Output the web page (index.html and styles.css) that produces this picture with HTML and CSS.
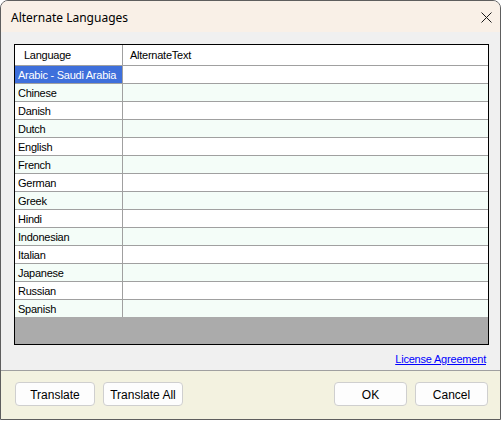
FILE: index.html
```html
<!doctype html>
<html>
<head>
<title>Alternate Languages</title>
<link rel="stylesheet" href="styles.css">
</head>
<body>
<div class="window">
  <div class="titlebar">
    <span class="title">Alternate Languages</span>
    <svg class="close" width="11" height="11" viewBox="0 0 11 11"><path d="M0.5 0.5L10.5 10.5M10.5 0.5L0.5 10.5" stroke="#1a1a1a" stroke-width="1" fill="none"/></svg>
  </div>
  <div class="content">
    <div class="grid">
      <div class="row head">
        <div class="cell lang">Language</div>
        <div class="cell alt">AlternateText</div>
      </div>
      <div class="row"><div class="cell lang selected">Arabic - Saudi Arabia</div><div class="cell alt"></div></div>
      <div class="row odd"><div class="cell lang">Chinese</div><div class="cell alt"></div></div>
      <div class="row"><div class="cell lang">Danish</div><div class="cell alt"></div></div>
      <div class="row odd"><div class="cell lang">Dutch</div><div class="cell alt"></div></div>
      <div class="row"><div class="cell lang">English</div><div class="cell alt"></div></div>
      <div class="row odd"><div class="cell lang">French</div><div class="cell alt"></div></div>
      <div class="row"><div class="cell lang">German</div><div class="cell alt"></div></div>
      <div class="row odd"><div class="cell lang">Greek</div><div class="cell alt"></div></div>
      <div class="row"><div class="cell lang">Hindi</div><div class="cell alt"></div></div>
      <div class="row odd"><div class="cell lang">Indonesian</div><div class="cell alt"></div></div>
      <div class="row"><div class="cell lang">Italian</div><div class="cell alt"></div></div>
      <div class="row odd"><div class="cell lang">Japanese</div><div class="cell alt"></div></div>
      <div class="row"><div class="cell lang">Russian</div><div class="cell alt"></div></div>
      <div class="row odd last"><div class="cell lang">Spanish</div><div class="cell alt"></div></div>
      <div class="empty"></div>
    </div>
    <div class="linkrow"><a href="#">License Agreement</a></div>
  </div>
  <div class="footer">
    <button class="btn">Translate</button>
    <button class="btn">Translate All</button>
    <span class="spacer"></span>
    <button class="btn small">OK</button>
    <button class="btn small">Cancel</button>
  </div>
</div>
</body>
</html>
```

FILE: styles.css
```css
html, body {
  margin: 0;
  padding: 0;
  background: #ffffff;
}
body {
  font-family: "Liberation Sans", Arial, sans-serif;
  font-size: 11px;
  color: #000;
}
.window {
  box-sizing: border-box;
  width: 501px;
  height: 420px;
  border: 1px solid #5e5e5e;
  border-radius: 8px 8px 0 0;
  overflow: hidden;
  display: flex;
  flex-direction: column;
  background: #f0f0f0;
}
.titlebar {
  height: 31px;
  flex: none;
  background: #f9f0e7;
  display: flex;
  align-items: center;
  padding: 0 8px 0 10px;
}
.title {
  font-family: "Noto Sans", "Open Sans", sans-serif;
  font-size: 12px;
  flex: 1;
  margin-top: 1px;
}
.close {
  margin-top: 1px;
}
.content {
  height: 338px;
  flex: none;
  padding: 12px 11px 0 13px;
  box-sizing: border-box;
  display: flex;
  flex-direction: column;
}
.grid {
  height: 301px;
  box-sizing: border-box;
  border: 1px solid #000;
  display: flex;
  flex-direction: column;
  background: #ababab;
}
.row {
  display: flex;
  height: 18px;
  box-sizing: border-box;
  border-bottom: 1px solid #a0a0a0;
  background: #fff;
}
.row.odd { background: #f4fdf8; }
.row.last { border-bottom: none; height: 17px; }
.row.head {
  height: 21px;
  background: #fff;
}
.cell {
  box-sizing: border-box;
  line-height: 17px;
  padding-top: 1px;
  white-space: nowrap;
  overflow: hidden;
  letter-spacing: -0.25px;
}
.lang {
  width: 108px;
  border-right: 1px solid #a0a0a0;
  padding-left: 3px;
}
.alt {
  flex: 1;
  padding-left: 7px;
}
.head .cell { line-height: 20px; padding-top: 0; }
.head .lang { padding-left: 9px; }
.selected {
  background: #3e6fdb;
  color: #fff;
}
.empty { flex: 1; }
.linkrow {
  flex: 1;
  display: flex;
  justify-content: flex-end;
  align-items: center;
  padding-right: 3px;
  padding-top: 2px;
}
.linkrow a {
  color: #0000ff;
  text-decoration: underline;
  letter-spacing: -0.2px;
}
.footer {
  flex: 1;
  background: #f3f2e0;
  border-top: 1px solid #a0a0a0;
  display: flex;
  align-items: flex-start;
  gap: 8px;
  padding: 11px 12px 0 14px;
}
.spacer { flex: 1; }
.btn {
  width: 80px;
  height: 24px;
  box-sizing: border-box;
  background: #fdfdfd;
  border: 1px solid #cfcfcf;
  border-radius: 4px;
  font-family: "Liberation Sans", Arial, sans-serif;
  font-size: 12px;
  color: #000;
  padding: 1px 0 0;
}
.btn.small { width: 73px; }
```
